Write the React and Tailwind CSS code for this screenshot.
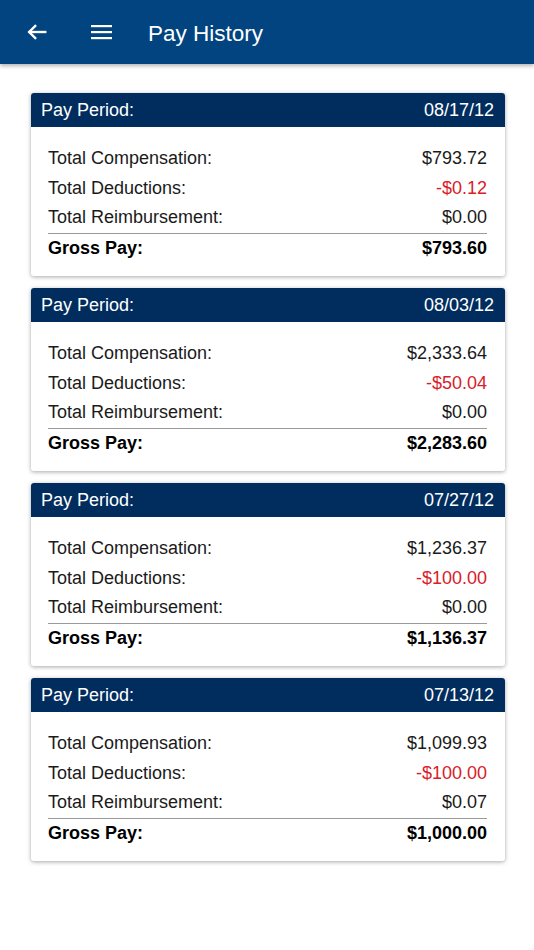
import React from "react";

const data = [
  { date: "08/17/12", comp: "$793.72", ded: "-$0.12", reimb: "$0.00", gross: "$793.60" },
  { date: "08/03/12", comp: "$2,333.64", ded: "-$50.04", reimb: "$0.00", gross: "$2,283.60" },
  { date: "07/27/12", comp: "$1,236.37", ded: "-$100.00", reimb: "$0.00", gross: "$1,136.37" },
  { date: "07/13/12", comp: "$1,099.93", ded: "-$100.00", reimb: "$0.07", gross: "$1,000.00" },
];

function Card({ d }) {
  return (
    <div className="bg-white rounded-[3px] shadow-[0_1px_4px_rgba(0,0,0,0.35)] overflow-hidden">
      <div className="h-[34px] bg-[#002d5e] text-white flex items-center justify-between pl-[10px] pr-[11px] text-[18px] pt-[1px]">
        <span>Pay Period:</span>
        <span>{d.date}</span>
      </div>
      <div className="pt-[17px] pb-[13px] pl-[17px] pr-[18px] text-[18px] text-[#1a1a1a]">
        <div className="flex justify-between leading-[29.5px]">
          <span>Total Compensation:</span>
          <span>{d.comp}</span>
        </div>
        <div className="flex justify-between leading-[29.5px]">
          <span>Total Deductions:</span>
          <span className="text-[#d8202a]">{d.ded}</span>
        </div>
        <div className="flex justify-between leading-[29.5px] border-b border-[#9a9a9a]">
          <span>Total Reimbursement:</span>
          <span>{d.reimb}</span>
        </div>
        <div className="flex justify-between leading-[29.5px] font-bold text-black">
          <span>Gross Pay:</span>
          <span>{d.gross}</span>
        </div>
      </div>
    </div>
  );
}

export default function App() {
  return (
    <div className="w-[534px] h-[950px] bg-white" style={{ fontFamily: '"Liberation Sans", Arial, sans-serif' }}>
      <div className="h-[64px] bg-[#01447f] flex items-center text-white shadow-[0_2px_4px_rgba(0,0,0,0.3)] relative z-10">
        <svg className="ml-[26px]" width="22" height="22" viewBox="0 0 24 24" fill="none" stroke="white" strokeWidth="2.6" strokeLinecap="square">
          <path d="M21 12H4" />
          <path d="M11 4.5L3.5 12l7.5 7.5" strokeLinecap="butt" />
        </svg>
        <svg className="ml-[43px]" width="21" height="16" viewBox="0 0 21 16" fill="white">
          <rect x="0" y="1" width="21" height="2.2" />
          <rect x="0" y="7" width="21" height="2.2" />
          <rect x="0" y="13" width="21" height="2.2" />
        </svg>
        <span className="ml-[36px] mt-[3px] text-[22.5px]">Pay History</span>
      </div>
      <div className="pt-[29px] px-[31px] flex flex-col gap-[12px] w-[536px]">
        {data.map((d, i) => (
          <Card key={i} d={d} />
        ))}
      </div>
    </div>
  );
}
